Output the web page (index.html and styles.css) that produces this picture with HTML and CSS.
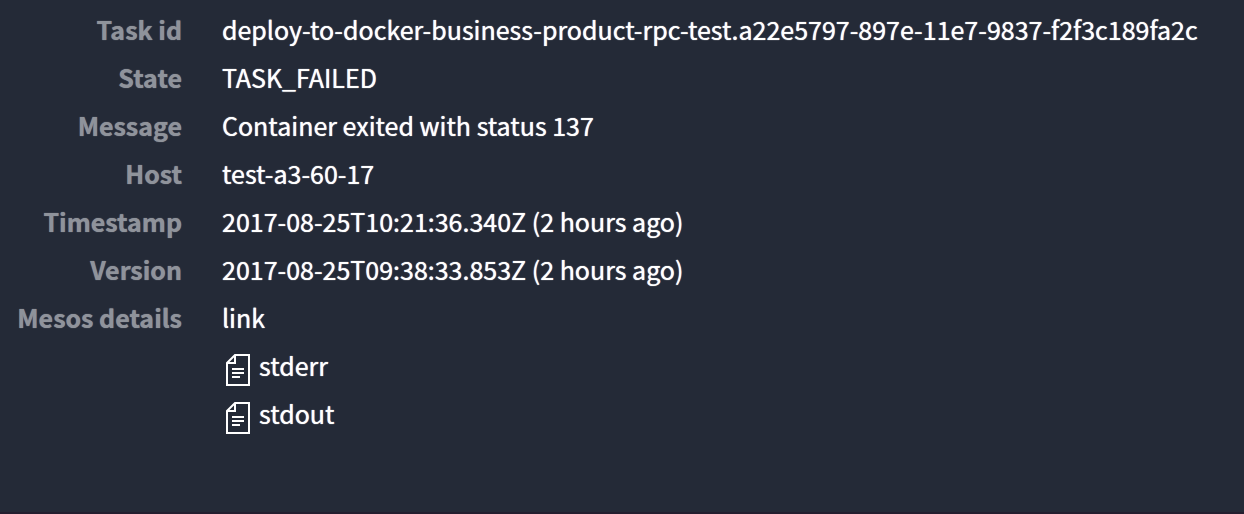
FILE: index.html
```html
<!DOCTYPE html>
<html lang="en">
<head>
<meta charset="utf-8">
<title>Last task failure</title>
<link rel="stylesheet" href="styles.css">
</head>
<body>
<main class="panel">
  <dl class="details">
    <dt>Task id</dt>
    <dd>deploy-to-docker-business-product-rpc-test.a22e5797-897e-11e7-9837-f2f3c189fa2c</dd>
    <dt>State</dt>
    <dd>TASK_FAILED</dd>
    <dt>Message</dt>
    <dd>Container exited with status 137</dd>
    <dt>Host</dt>
    <dd>test-a3-60-17</dd>
    <dt>Timestamp</dt>
    <dd>2017-08-25T10:21:36.340Z (2 hours ago)</dd>
    <dt>Version</dt>
    <dd>2017-08-25T09:38:33.853Z (2 hours ago)</dd>
    <dt>Mesos details</dt>
    <dd><a href="#details">link</a></dd>
    <dd>
      <a class="file" href="#stderr">
        <svg class="file-icon" width="24" height="32" viewBox="0 0 24 32" aria-hidden="true"><path d="M9 1H23V31H1V9ZV9H1M6 15H18M6 19H18M6 23H14"/></svg>
        stderr
      </a>
    </dd>
    <dd>
      <a class="file" href="#stdout">
        <svg class="file-icon" width="24" height="32" viewBox="0 0 24 32" aria-hidden="true"><path d="M9 1H23V31H1V9ZV9H1M6 15H18M6 19H18M6 23H14"/></svg>
        stdout
      </a>
    </dd>
  </dl>
</main>
</body>
</html>
```
FILE: styles.css
```css
* {
  box-sizing: border-box;
}

body {
  margin: 0;
  background: #242a37;
  color: #fff;
  font-family: "Noto Sans CJK SC", "Open Sans", sans-serif;
  font-size: 25px;
  font-weight: 400;
  line-height: 48px;
  text-shadow: 0 0 1px currentColor;
}

.panel {
  min-height: 100vh;
  padding: 5px 16px;
  border-bottom: 2px solid #241e2f;
}

.details {
  display: grid;
  grid-template-columns: 166px 1fr;
  column-gap: 40px;
  margin: 0;
}

.details dt {
  color: #8f939b;
  font-weight: 700;
  text-align: right;
  white-space: nowrap;
}

.details dd {
  grid-column: 2;
  margin: 0;
  overflow-wrap: anywhere;
}

.details a {
  color: inherit;
  text-decoration: none;
}

.details .file {
  display: flex;
  gap: 9px;
  padding-left: 4px;
}

.file-icon {
  margin-top: 13px;
  fill: none;
  stroke: currentColor;
  stroke-width: 2;
}
```
